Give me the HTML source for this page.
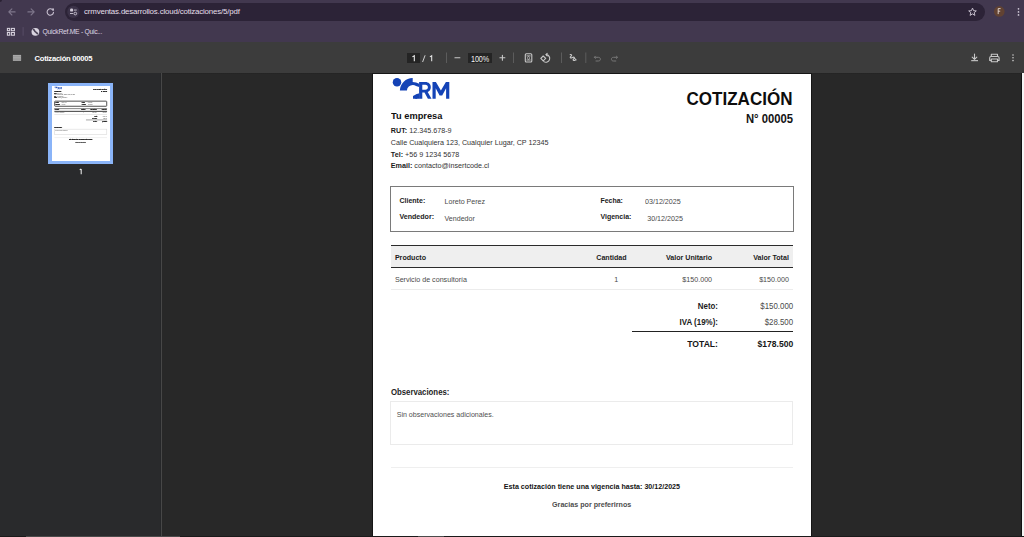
<!DOCTYPE html>
<html><head><meta charset="utf-8"><style>
*{margin:0;padding:0;box-sizing:border-box}
html,body{width:1024px;height:537px;overflow:hidden;background:#282828;font-family:"Liberation Sans",sans-serif}
.a{position:absolute}
.t{position:absolute;white-space:nowrap;line-height:1}
.t b{font-weight:bold}
#page .t{transform:scaleY(1.05);transform-origin:0 85%}
#chrome{position:absolute;left:0;top:0;width:1024px;height:42px;background:#42384f}
#pill{position:absolute;left:65px;top:3px;width:920px;height:18px;border-radius:9px;background:#2c2337}
#toolbar{position:absolute;left:0;top:42px;width:1024px;height:31px;background:#3c3c3c}
#side{position:absolute;left:0;top:73px;width:161px;height:464px;background:#292a2c}
#divl{position:absolute;left:161px;top:73px;width:1px;height:464px;background:#474747}
#page{position:absolute;left:373px;top:74px;width:438px;height:567px;background:#fff;box-shadow:0 0 0 1px #161616;overflow:hidden}
#thumb{position:absolute;left:51.7px;top:86.05px;width:438px;height:567px;background:#fff;transform:scale(0.1311);transform-origin:0 0;overflow:hidden;will-change:transform}
.ibox{border:1px solid #7a7a7a}
.tl{height:1.5px;background:#2b2b2b}
.rl{height:1px;background:#ececec}
.totl{height:1.1px;background:#222}
.obox{border:1px solid #ebebeb}
.fl{height:1px;background:#efefef}
#thumb .ibox{border:7px solid #404040;border-radius:8px}
#thumb .tl{height:7px;margin-top:-3px;background:#3a3a3a}
#thumb .rl{height:5px;background:#dcdcdc}
#thumb .totl{height:4px;background:#555}
#thumb .obox{border:5px solid #dcdcdc}
#thumb .fl{height:4px;background:#e4e4e4}
#thumb .t b{-webkit-text-stroke:1.6px currentColor}
#thumbb{position:absolute;left:48.1px;top:82.6px;width:64.7px;height:81.2px;background:#8ab4f8}
</style></head>
<body>
<div id="chrome"><div id="pill"></div></div>
<div class="a" style="left:0;top:0;width:2px;height:2px;background:#2a2233;border-bottom-right-radius:2px"></div>
<svg class="a" style="left:0;top:0" width="1024" height="42" viewBox="0 0 1024 42">
<g fill="none" stroke-linecap="round" stroke-linejoin="round">
 <path d="M15.1,11.9 H8.9 M11.9,8.8 L8.8,11.9 L11.9,15" stroke="#7d758a" stroke-width="1.1"/>
 <path d="M27.9,11.9 H34.1 M31.1,8.8 L34.2,11.9 L31.1,15" stroke="#7d758a" stroke-width="1.1"/>
 <path d="M53.1,10.4 A3.2,3.2 0 1 0 53.5,12.4" stroke="#c9c1d1" stroke-width="1.1"/>
</g>
<path d="M51.9,8.6 L54,8.6 L54,10.7 Z" fill="#c9c1d1"/>
<circle cx="73.35" cy="11.9" r="6.1" fill="#3b3248"/>
<g fill="#cfc8d6">
 <rect x="70.1" y="8.6" width="3" height="3" rx="1.2"/>
 <rect x="73.9" y="9.6" width="2.8" height="0.9"/>
 <rect x="70" y="13.1" width="3" height="0.9"/>
</g>
<circle cx="75.3" cy="13.55" r="1.35" fill="none" stroke="#cfc8d6" stroke-width="0.9"/>
<path d="M972.5,8.1 L973.6,10.7 L976.3,10.9 L974.2,12.7 L974.9,15.4 L972.5,13.9 L970.1,15.4 L970.8,12.7 L968.7,10.9 L971.4,10.7 Z" fill="none" stroke="#c4bdcb" stroke-width="1" stroke-linejoin="round"/>
<circle cx="999.3" cy="11.4" r="5.3" fill="#614232"/>
<path d="M998.2,14.1 V8.6 H1000.6 M998.2,11.2 H1000.2" fill="none" stroke="#e8dcd6" stroke-width="0.9"/>
<g fill="#cfc8d6"><circle cx="1018.5" cy="8.8" r="0.85"/><circle cx="1018.5" cy="11.9" r="0.85"/><circle cx="1018.5" cy="14.9" r="0.85"/></g>
<g fill="none" stroke="#d8d2de" stroke-width="1.05">
 <rect x="7.4" y="28.4" width="2.3" height="2.3"/>
 <rect x="11.4" y="28.4" width="3" height="2.3"/>
 <rect x="7.4" y="32.5" width="2.3" height="2.7"/>
 <rect x="11.4" y="32.5" width="3" height="2.7"/>
</g>
<rect x="22.6" y="27.1" width="1" height="8.6" fill="#574d66"/>
<circle cx="35.4" cy="31.8" r="3.9" fill="#d9d4df"/>
<path d="M33.4,29.5 C34.4,30 34.6,31.1 35.3,31.8 C36,32.5 36.9,32.8 37.5,33.7" fill="none" stroke="#4a4256" stroke-width="1.6" stroke-linecap="round"/>
</svg>
<div class="t" style="left:84px;top:8.2px;font-size:7.9px;letter-spacing:-0.17px;color:#e4dfe9">crmventas.desarrollos.cloud/cotizaciones/5/pdf</div>
<div class="t" style="left:42.6px;top:28.7px;font-size:6.8px;letter-spacing:-0.3px;color:#ddd6e3">QuickRef.ME - Quic...</div>
<div id="toolbar"></div>
<div class="a" style="left:0;top:73px;width:1024px;height:1px;background:linear-gradient(#232323,#262626)"></div>
<div class="t b" style="left:34.6px;top:55.04px;font-size:7.6px;font-weight:bold;letter-spacing:-0.25px;color:#ffffff">Cotización 00005</div>
<svg class="a" style="left:0;top:42px" width="1024" height="31" viewBox="0 42 1024 31">
<g fill="#a8a8a8"><rect x="12.9" y="54.9" width="8.2" height="6"/></g>
<g fill="#8a8a8a"><rect x="12.9" y="56.4" width="8.2" height="0.45"/><rect x="12.9" y="57.9" width="8.2" height="0.45"/><rect x="12.9" y="59.4" width="8.2" height="0.45"/></g>
<rect x="407" y="53" width="13" height="10" fill="#242424"/>
<rect x="468" y="53" width="24" height="10" fill="#242424"/>
<g fill="#5c5c5c"><rect x="446" y="52.5" width="1" height="10.5"/><rect x="513" y="52.5" width="1" height="10.5"/><rect x="561" y="52.5" width="1" height="10.5"/><rect x="585.3" y="52.5" width="1" height="10.5"/></g>
<g fill="none" stroke="#c8c8c8" stroke-width="1.1" stroke-linecap="round" stroke-linejoin="round">
 <path d="M454.9,57.8 H459.9"/>
 <path d="M499.9,57.8 H504.9 M502.4,55.3 V60.3"/>
 <rect x="525.3" y="53.7" width="6.5" height="8.3" rx="1"/>
 <path d="M526.9,55.9 H530.2 M526.9,60 H530.2 M527.7,57.3 L528.55,56.6 L529.4,57.3 M527.7,58.6 L528.55,59.3 L529.4,58.6" stroke-width="0.9"/>
 <path d="M546.3,54.6 A3.8,3.8 0 1 1 543.9,61.6"/>
 <path d="M547.2,53.3 L545.9,54.6 L547.2,55.9"/>
 <path d="M543.2,56 L545.7,58.4 L543.2,60.8 L540.8,58.4 Z"/>
 <path d="M570.2,54.6 C571.6,54.4 572.3,55.3 570.9,56.4 C569.5,57.5 570.6,58.6 572.4,57.5 C574.2,56.4 575.1,57.8 573.5,59.1 C572.5,60 573.6,61 575.2,60.2"/>
 <path d="M573.8,57.6 L576.1,59.9"/>
 <path d="M972.2,57.1 L974.5,59.4 L976.8,57.1 M974.5,54.1 V59"/>
 <rect x="991.3" y="54.3" width="6.2" height="2.2"/>
 <path d="M990.9,60.4 H989.7 V57.9 C989.7,57 990.2,56.5 991,56.5 H997.8 C998.6,56.5 999.1,57 999.1,57.9 V60.4 H997.9"/>
 <rect x="991.3" y="59" width="6.2" height="2.8"/>
</g>
<g fill="none" stroke="#777" stroke-width="1" stroke-linecap="round" stroke-linejoin="round">
 <path d="M595.4,56.2 L594.3,57.3 L595.4,58.4 M594.5,57.3 H598.4 C599.6,57.3 600.4,58.1 600.4,59.2 C600.4,60.3 599.6,61 598.4,61 H596"/>
 <path d="M616.4,56.2 L617.5,57.3 L616.4,58.4 M617.3,57.3 H613.4 C612.2,57.3 611.4,58.1 611.4,59.2 C611.4,60.3 612.2,61 613.4,61 H615.8"/>
</g>
<rect x="971.2" y="60.1" width="6.8" height="1.1" fill="#c8c8c8"/>
<g fill="#c8c8c8"><circle cx="1013" cy="55" r="0.8"/><circle cx="1013" cy="57.8" r="0.8"/><circle cx="1013" cy="60.6" r="0.8"/></g>
</svg>
<svg class="a" style="left:404px;top:50px" width="36" height="16" viewBox="404 50 36 16"><g fill="none" stroke="#f0f0f0" stroke-width="1.05" stroke-linecap="butt"><path d="M414.3,61.2 V55.7 L412.4,56.9"/><path d="M431.7,61.2 V55.7 L429.9,56.9" stroke="#e6e6e6"/><path d="M422.6,62 L425.1,55.3" stroke="#e0e0e0" stroke-width="0.9"/></g></svg>
<div class="t" style="left:471px;top:54.6px;font-size:8.5px;letter-spacing:-0.1px;transform:scaleX(0.85);transform-origin:0 0;color:#f0f0f0">100%</div>
<div id="side"></div><div id="divl"></div>
<div class="a" style="left:160px;top:73px;width:1px;height:464px;background:#262729"></div>
<svg class="a" style="left:76px;top:166px" width="10" height="10" viewBox="76 166 10 10"><path d="M81.2,168.9 V174.2 M81.2,168.9 L79.7,169.9" fill="none" stroke="#ececec" stroke-width="1.05"/></svg>
<div class="a" style="left:1021px;top:73px;width:1px;height:464px;background:#111"></div>
<div class="a" style="left:1022px;top:73px;width:2px;height:464px;background:#f4f4f4"></div>
<div id="thumbb"></div>
<div id="thumb"><svg class="a" style="left:0;top:0" width="438" height="60" viewBox="373 74 438 60">
<g fill="#1443b6">
<circle cx="397" cy="82.15" r="4.25"/>
<path d="M399.9,90.6 A12.7,12.7 0 0 1 412.7,78.1 L412.7,81.9 C415.1,82.1 417.3,82.7 419.2,83.7 L419.2,87 C418,86.4 417,86.1 416,85.9 C415,85.3 414,85 413,85 A5.9,5.9 0 0 0 406.9,90.6 Z"/>
<path d="M413,95.9 C414.3,95.5 415.5,94.9 416.6,94.1 C417.5,93.9 418.4,93.6 419.2,93.2 L419.2,98.8 C417.2,98.9 415.1,98.9 413,98.8 Z"/>
<path fill-rule="evenodd" d="M419.1,98.8 V82 H425.3 C428.7,82 430.8,84.1 430.8,87.2 C430.8,89.5 429.6,91.2 427.7,92 L431.5,98.8 H427.9 L424.5,92.5 H422.3 V98.8 Z M422.3,84.8 V89.8 H425.3 C427,89.8 427.9,88.8 427.9,87.3 C427.9,85.8 427,84.8 425.3,84.8 Z"/>
<path d="M432.5,98.8 V82 H435.9 L440.9,90.6 L445.9,82 H449.3 V98.8 H446.1 V88.3 L442.2,95.6 H439.6 L435.7,88.3 V98.8 Z"/>
</g></svg>
<div class="t" style="top:38.04px;font-size:9.25px;color:#111;left:18.10px;transform:scaleY(1.07);transform-origin:0 85%"><b>Tu empresa</b></div>
<div class="t" style="top:52.88px;font-size:7.2px;color:#333333;left:17.80px;"><b style="color:#1c1c1c">RUT:</b> 12.345.678-9</div>
<div class="t" style="top:64.78px;font-size:7.2px;color:#333333;left:17.80px;">Calle Cualquiera 123, Cualquier Lugar, CP 12345</div>
<div class="t" style="top:77.38px;font-size:7.2px;color:#333333;left:17.80px;"><b style="color:#1c1c1c">Tel:</b> +56 9 1234 5678</div>
<div class="t" style="top:88.48px;font-size:7.2px;color:#333333;left:17.80px;"><b style="color:#1c1c1c">Email:</b> contacto@insertcode.cl</div>
<div class="t" style="top:16.81px;font-size:17.05px;color:#0d0d0d;left:313.52px;transform:scaleY(1.07);transform-origin:0 85%"><b>COTIZACIÓN</b></div>
<div class="t" style="top:40.10px;font-size:11.29px;color:#141414;left:372.90px;"><b>N° 00005</b></div>
<div class="a ibox" style="left:17px;top:112px;width:404px;height:46px"></div>
<div class="t" style="top:123.41px;font-size:7.05px;color:#1c1c1c;left:26.40px;"><b>Cliente:</b></div>
<div class="t" style="top:124.97px;font-size:7.1px;color:#4a4a4a;left:71.50px;">Loreto Perez</div>
<div class="t" style="top:139.97px;font-size:7.1px;color:#1c1c1c;left:26.40px;"><b>Vendedor:</b></div>
<div class="t" style="top:141.66px;font-size:7.1px;color:#4a4a4a;left:71.50px;">Vendedor</div>
<div class="t" style="top:123.25px;font-size:7.0px;color:#1c1c1c;left:227.40px;"><b>Fecha:</b></div>
<div class="t" style="top:124.62px;font-size:7.15px;color:#4a4a4a;left:272.00px;">03/12/2025</div>
<div class="t" style="top:138.85px;font-size:7.0px;color:#1c1c1c;left:227.40px;"><b>Vigencia:</b></div>
<div class="t" style="top:142.42px;font-size:7.15px;color:#4a4a4a;left:274.20px;">30/12/2025</div>
<div class="a tl" style="left:18px;top:170.5px;width:402px"></div>
<div class="a" style="left:18px;top:172px;width:402px;height:20.5px;background:#efefef"></div>
<div class="a tl" style="left:18px;top:192.5px;width:402px"></div>
<div class="a rl" style="left:18px;top:215.2px;width:402px"></div>
<div class="t" style="top:181.47px;font-size:7.1px;color:#1c1c1c;left:21.90px;"><b>Producto</b></div>
<div class="t" style="top:180.66px;font-size:7.1px;color:#1c1c1c;left:223.30px;"><b>Cantidad</b></div>
<div class="t" style="top:180.66px;font-size:7.1px;color:#1c1c1c;left:292.94px;"><b>Valor Unitario</b></div>
<div class="t" style="top:180.66px;font-size:7.1px;color:#1c1c1c;left:380.13px;"><b>Valor Total</b></div>
<div class="t" style="top:203.44px;font-size:7.13px;color:#4a4a4a;left:21.90px;">Servicio de consultoría</div>
<div class="t" style="top:202.54px;font-size:7.13px;color:#4a4a4a;left:241.20px;">1</div>
<div class="t" style="top:202.54px;font-size:7.13px;color:#4a4a4a;left:309.36px;">$150.000</div>
<div class="t" style="top:202.54px;font-size:7.13px;color:#4a4a4a;left:386.16px;">$150.000</div>
<div class="t" style="top:229.29px;font-size:7.9px;color:#1c1c1c;left:324.81px;"><b>Neto:</b></div>
<div class="t" style="top:229.29px;font-size:7.9px;color:#4a4a4a;left:387.25px;">$150.000</div>
<div class="t" style="top:244.84px;font-size:7.95px;color:#1c1c1c;left:306.57px;"><b>IVA (19%):</b></div>
<div class="t" style="top:244.89px;font-size:7.9px;color:#4a4a4a;left:391.64px;">$28.500</div>
<div class="a totl" style="left:258.9px;top:256.8px;width:161.30000000000007px"></div>
<div class="t" style="top:266.09px;font-size:8.6px;color:#161616;left:314.27px;"><b>TOTAL:</b></div>
<div class="t" style="top:266.42px;font-size:8.56px;color:#161616;left:384.50px;"><b>$178.500</b></div>
<div class="t" style="top:314.97px;font-size:7.8px;color:#1e1e1e;left:17.90px;"><b>Observaciones:</b></div>
<div class="a obox" style="left:17px;top:326.6px;width:403px;height:44.6px"></div>
<div class="t" style="top:336.69px;font-size:7.07px;color:#4f4f4f;left:23.70px;">Sin observaciones adicionales.</div>
<div class="a fl" style="left:18px;top:392.5px;width:402px"></div>
<div class="t" style="top:409.54px;font-size:7.13px;color:#141414;left:130.83px;"><b>Esta cotización tiene una vigencia hasta: 30/12/2025</b></div>
<div class="t" style="top:428.44px;font-size:7.13px;color:#4d4d4d;left:179.07px;"><b>Gracias por preferirnos</b></div></div>
<div id="page">
<svg class="a" style="left:0;top:0" width="438" height="60" viewBox="373 74 438 60">
<g fill="#1443b6">
<circle cx="397" cy="82.15" r="4.25"/>
<path d="M399.9,90.6 A12.7,12.7 0 0 1 412.7,78.1 L412.7,81.9 C415.1,82.1 417.3,82.7 419.2,83.7 L419.2,87 C418,86.4 417,86.1 416,85.9 C415,85.3 414,85 413,85 A5.9,5.9 0 0 0 406.9,90.6 Z"/>
<path d="M413,95.9 C414.3,95.5 415.5,94.9 416.6,94.1 C417.5,93.9 418.4,93.6 419.2,93.2 L419.2,98.8 C417.2,98.9 415.1,98.9 413,98.8 Z"/>
<path fill-rule="evenodd" d="M419.1,98.8 V82 H425.3 C428.7,82 430.8,84.1 430.8,87.2 C430.8,89.5 429.6,91.2 427.7,92 L431.5,98.8 H427.9 L424.5,92.5 H422.3 V98.8 Z M422.3,84.8 V89.8 H425.3 C427,89.8 427.9,88.8 427.9,87.3 C427.9,85.8 427,84.8 425.3,84.8 Z"/>
<path d="M432.5,98.8 V82 H435.9 L440.9,90.6 L445.9,82 H449.3 V98.8 H446.1 V88.3 L442.2,95.6 H439.6 L435.7,88.3 V98.8 Z"/>
</g></svg>
<div class="t" style="top:38.04px;font-size:9.25px;color:#111;left:18.10px;transform:scaleY(1.07);transform-origin:0 85%"><b>Tu empresa</b></div>
<div class="t" style="top:52.88px;font-size:7.2px;color:#333333;left:17.80px;"><b style="color:#1c1c1c">RUT:</b> 12.345.678-9</div>
<div class="t" style="top:64.78px;font-size:7.2px;color:#333333;left:17.80px;">Calle Cualquiera 123, Cualquier Lugar, CP 12345</div>
<div class="t" style="top:77.38px;font-size:7.2px;color:#333333;left:17.80px;"><b style="color:#1c1c1c">Tel:</b> +56 9 1234 5678</div>
<div class="t" style="top:88.48px;font-size:7.2px;color:#333333;left:17.80px;"><b style="color:#1c1c1c">Email:</b> contacto@insertcode.cl</div>
<div class="t" style="top:16.81px;font-size:17.05px;color:#0d0d0d;left:313.52px;transform:scaleY(1.07);transform-origin:0 85%"><b>COTIZACIÓN</b></div>
<div class="t" style="top:40.10px;font-size:11.29px;color:#141414;left:372.90px;"><b>N° 00005</b></div>
<div class="a ibox" style="left:17px;top:112px;width:404px;height:46px"></div>
<div class="t" style="top:123.41px;font-size:7.05px;color:#1c1c1c;left:26.40px;"><b>Cliente:</b></div>
<div class="t" style="top:124.97px;font-size:7.1px;color:#4a4a4a;left:71.50px;">Loreto Perez</div>
<div class="t" style="top:139.97px;font-size:7.1px;color:#1c1c1c;left:26.40px;"><b>Vendedor:</b></div>
<div class="t" style="top:141.66px;font-size:7.1px;color:#4a4a4a;left:71.50px;">Vendedor</div>
<div class="t" style="top:123.25px;font-size:7.0px;color:#1c1c1c;left:227.40px;"><b>Fecha:</b></div>
<div class="t" style="top:124.62px;font-size:7.15px;color:#4a4a4a;left:272.00px;">03/12/2025</div>
<div class="t" style="top:138.85px;font-size:7.0px;color:#1c1c1c;left:227.40px;"><b>Vigencia:</b></div>
<div class="t" style="top:142.42px;font-size:7.15px;color:#4a4a4a;left:274.20px;">30/12/2025</div>
<div class="a tl" style="left:18px;top:170.5px;width:402px"></div>
<div class="a" style="left:18px;top:172px;width:402px;height:20.5px;background:#efefef"></div>
<div class="a tl" style="left:18px;top:192.5px;width:402px"></div>
<div class="a rl" style="left:18px;top:215.2px;width:402px"></div>
<div class="t" style="top:181.47px;font-size:7.1px;color:#1c1c1c;left:21.90px;"><b>Producto</b></div>
<div class="t" style="top:180.66px;font-size:7.1px;color:#1c1c1c;left:223.30px;"><b>Cantidad</b></div>
<div class="t" style="top:180.66px;font-size:7.1px;color:#1c1c1c;left:292.94px;"><b>Valor Unitario</b></div>
<div class="t" style="top:180.66px;font-size:7.1px;color:#1c1c1c;left:380.13px;"><b>Valor Total</b></div>
<div class="t" style="top:203.44px;font-size:7.13px;color:#4a4a4a;left:21.90px;">Servicio de consultoría</div>
<div class="t" style="top:202.54px;font-size:7.13px;color:#4a4a4a;left:241.20px;">1</div>
<div class="t" style="top:202.54px;font-size:7.13px;color:#4a4a4a;left:309.36px;">$150.000</div>
<div class="t" style="top:202.54px;font-size:7.13px;color:#4a4a4a;left:386.16px;">$150.000</div>
<div class="t" style="top:229.29px;font-size:7.9px;color:#1c1c1c;left:324.81px;"><b>Neto:</b></div>
<div class="t" style="top:229.29px;font-size:7.9px;color:#4a4a4a;left:387.25px;">$150.000</div>
<div class="t" style="top:244.84px;font-size:7.95px;color:#1c1c1c;left:306.57px;"><b>IVA (19%):</b></div>
<div class="t" style="top:244.89px;font-size:7.9px;color:#4a4a4a;left:391.64px;">$28.500</div>
<div class="a totl" style="left:258.9px;top:256.8px;width:161.30000000000007px"></div>
<div class="t" style="top:266.09px;font-size:8.6px;color:#161616;left:314.27px;"><b>TOTAL:</b></div>
<div class="t" style="top:266.42px;font-size:8.56px;color:#161616;left:384.50px;"><b>$178.500</b></div>
<div class="t" style="top:314.97px;font-size:7.8px;color:#1e1e1e;left:17.90px;"><b>Observaciones:</b></div>
<div class="a obox" style="left:17px;top:326.6px;width:403px;height:44.6px"></div>
<div class="t" style="top:336.69px;font-size:7.07px;color:#4f4f4f;left:23.70px;">Sin observaciones adicionales.</div>
<div class="a fl" style="left:18px;top:392.5px;width:402px"></div>
<div class="t" style="top:409.54px;font-size:7.13px;color:#141414;left:130.83px;"><b>Esta cotización tiene una vigencia hasta: 30/12/2025</b></div>
<div class="t" style="top:428.44px;font-size:7.13px;color:#4d4d4d;left:179.07px;"><b>Gracias por preferirnos</b></div>
</div>
<div class="a" style="left:0;top:536px;width:1024px;height:1px;background:#1a1a1a"></div>
<div class="a" style="left:26px;top:536px;width:154px;height:1px;background:#4b4b4b"></div>
<div class="a" style="left:418px;top:536px;width:26px;height:1px;background:#4b4b4b"></div>
</body></html>
